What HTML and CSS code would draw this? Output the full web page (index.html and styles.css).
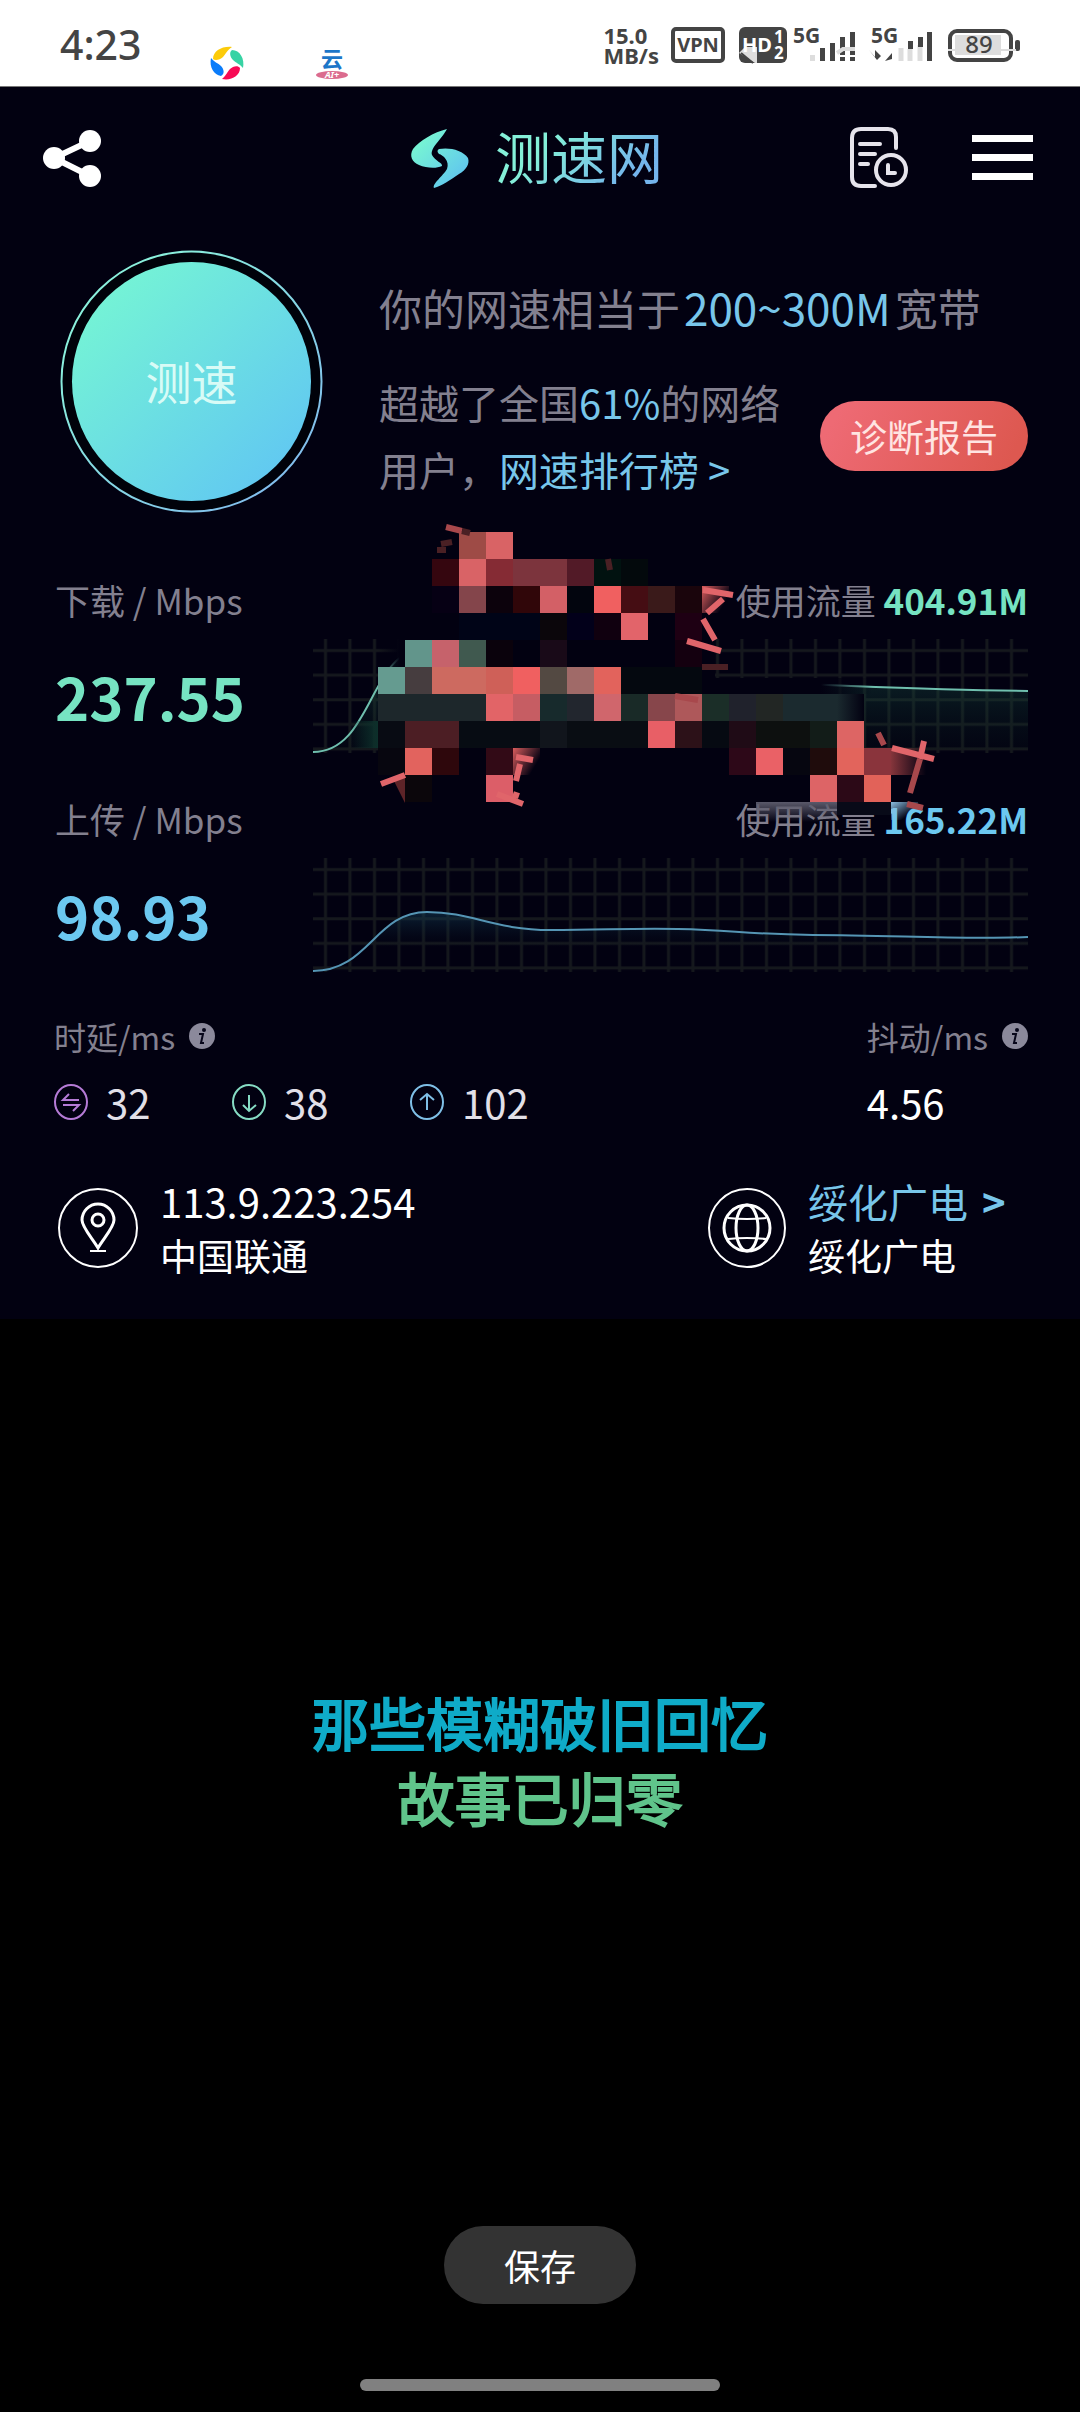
FILE: index.html
```html
<!DOCTYPE html>
<html lang="zh-CN">
<head>
    <meta charset="UTF-8">
    <meta name="viewport" content="width=device-width, initial-scale=1.0">
    <title>测速网</title>
    <link rel="stylesheet" href="styles.css">
</head>
<body>
    <div class="status-bar">
        <span class="time">4:23</span>
        <div class="status-apps">
            <svg width="34" height="34" viewBox="0 0 34 34">
                <path fill="#fccb0a" d="M3 13C3 5 12 0 22 1C17 4 16 8 13 11C10 14 5 15 3 13Z"/>
                <path fill="#37d3a4" d="M22 4C30 4 35 13 33 22C30 18 26 17 23 14C20 11 19 6 22 4Z"/>
                <path fill="#f70a54" d="M30 22C30 30 21 35 12 33C16 30 17 26 20 23C23 20 28 19 30 22Z"/>
                <path fill="#0a7cfa" d="M11 30C4 29 -1 21 1 12C4 16 8 17 11 20C14 23 15 28 11 30Z"/>
            </svg>
            <svg width="34" height="34" viewBox="0 0 34 34">
                <text class="cloud-text" x="17" y="21" text-anchor="middle">云</text>
                <ellipse cx="17" cy="29" rx="16" ry="4" fill="#db6b8e"/>
                <text class="ai-text" x="17" y="32" text-anchor="middle">AI+</text>
            </svg>
        </div>
        <div class="status-icons">
            <span class="net-speed">15.0<br>MB/s</span>
            <svg class="vpn" width="54" height="36" viewBox="0 0 54 36">
                <rect x="2" y="2" width="50" height="32" rx="3" fill="none" stroke="#444" stroke-width="4"/>
                <text class="badge-text" x="27" y="25" text-anchor="middle" fill="#444">VPN</text>
            </svg>
            <svg class="hd" width="48" height="36" viewBox="0 0 48 36">
                <rect width="48" height="36" rx="6" fill="#444"/>
                <path d="M0 26L6 20H18V36H16Z" fill="#ddd"/>
                <path d="M2 26L14 36" stroke="#444" stroke-width="2"/>
                <text class="badge-text" x="3" y="25" fill="#fff">HD</text>
                <text class="digit-text" x="35" y="16" fill="#fff">1</text>
                <text class="digit-text" x="35" y="32" fill="#fff">2</text>
            </svg>
            <svg class="signal" width="62" height="36" viewBox="0 0 62 36">
                <text class="net-text" x="0" y="16">5G</text>
                <g stroke="#444" stroke-width="5">
                    <path d="M29.500 21V34M39.500 16V34M49.500 10V34M59.500 5V34"/>
                </g>
                <path d="M19.500 28V34" stroke="#ddd" stroke-width="5"/>
                <path d="M44 26L50 22H62" stroke="#ddd" stroke-width="4" fill="none"/>
                <path d="M46 29H62" stroke="#fff" stroke-width="2"/>
            </svg>
            <svg class="signal-second" width="65" height="36" viewBox="0 0 65 36">
                <text class="net-text" x="3" y="16">5G</text>
                <path d="M1 23L7 30V23L13 29L9 33ZM17 34L24 26V32Z" fill="#444"/>
                <g stroke="#ddd" stroke-width="5">
                    <path d="M33 21V34M42 22V34M52 18V34"/>
                </g>
                <path d="M42.500 14V22M52.500 10V20M61.500 5V34" stroke="#444" stroke-width="5"/>
            </svg>
            <svg class="battery" width="72" height="36" viewBox="0 0 72 36">
                <rect x="2" y="4" width="61" height="29" rx="7" fill="none" stroke="#444" stroke-width="4"/>
                <rect x="7" y="8" width="46" height="20" fill="#ddd"/>
                <rect x="67" y="13" width="5" height="11" rx="2" fill="#444"/>
                <path d="M0 23H14M53 23H68" stroke="#ddd" stroke-width="2"/>
                <text class="battery-text" x="31" y="26" text-anchor="middle">89</text>
            </svg>
        </div>
    </div>

    <main class="panel">
        <header class="header">
            <button class="icon-button share" type="button" aria-label="分享">
                <svg width="62" height="62" viewBox="0 0 62 62" fill="#fff" stroke="#fff">
                    <path d="M49 14L13 31L49 49" fill="none" stroke-width="6"/>
                    <circle cx="49" cy="14" r="11" stroke="none"/>
                    <circle cx="13" cy="31" r="11" stroke="none"/>
                    <circle cx="49" cy="49" r="11" stroke="none"/>
                </svg>
            </button>
            <div class="brand">
                <svg width="58" height="60" viewBox="0 0 58 60">
                    <defs>
                        <linearGradient id="logoFill" x1="0" y1="0" x2="1" y2="1">
                            <stop offset="0.200" stop-color="#76f3d4"/>
                            <stop offset="0.900" stop-color="#5fc3f0"/>
                        </linearGradient>
                    </defs>
                    <path fill="url(#logoFill)" d="M36 1C23 4 8 13 2 21C-2 28 1 34 8 37C15 40 25 41 31 38C32 35 24 33 21 27C19 20 30 12 36 1ZM28 21C38 19 52 22 57 30C59 36 55 42 48 46C39 52 31 58 23 60C21 56 32 48 36 41C39 33 32 27 28 26C26 24 26 22 28 21Z"/>
                </svg>
                <h1 class="brand-name">测速网</h1>
            </div>
            <div class="header-actions">
                <button class="icon-button" type="button" aria-label="测速记录">
                    <svg width="58" height="62" viewBox="0 0 58 62" fill="none" stroke="#e6e4ec" stroke-width="4" stroke-linecap="round">
                        <path d="M46 21V10Q46 2 38 2H11Q2 2 2 11V50Q2 59 11 59H25"/>
                        <path d="M10 17H30M10 27H25M10 37H18"/>
                        <circle cx="41" cy="43" r="15"/>
                        <path d="M38 38V46H45"/>
                    </svg>
                </button>
                <button class="icon-button" type="button" aria-label="菜单">
                    <svg width="61" height="46" viewBox="0 0 61 46" fill="#fff">
                        <rect y="0" width="61" height="7"/>
                        <rect y="19" width="61" height="7"/>
                        <rect y="38" width="61" height="7"/>
                    </svg>
                </button>
            </div>
        </header>

        <section class="summary">
            <button class="test-button" type="button">
                <svg class="test-ring" viewBox="0 0 263 263">
                    <defs>
                        <linearGradient id="ringFill" x1="0" y1="0" x2="1" y2="1">
                            <stop offset="0.200" stop-color="#8af0dc"/>
                            <stop offset="0.850" stop-color="#82bfec"/>
                        </linearGradient>
                        <linearGradient id="testFill" x1="0" y1="0" x2="1" y2="1">
                            <stop offset="0.150" stop-color="#74f2d6"/>
                            <stop offset="0.850" stop-color="#62caf0"/>
                        </linearGradient>
                    </defs>
                    <circle cx="131.500" cy="131.500" r="130" fill="#00020a" stroke="url(#ringFill)" stroke-width="2"/>
                    <circle cx="131.500" cy="131.500" r="119.500" fill="url(#testFill)"/>
                </svg>
                <span class="test-label">测速</span>
            </button>
            <div class="summary-text">
                <p class="bandwidth">你的网速相当于<span class="highlight speed-range">200~300M</span>宽带</p>
                <div class="rank">
                    <p class="rank-text">超越了全国<span class="highlight">61%</span>的网络<br>用户，<a href="#rank">网速排行榜 &gt;</a></p>
                    <button class="report-button" type="button">诊断报告</button>
                </div>
            </div>
        </section>

        <section class="metric download">
            <h2 class="metric-label">下载 / Mbps</h2>
            <p class="usage">使用流量 <strong>404.91M</strong></p>
            <p class="metric-value">237.55</p>
            <svg class="chart" viewBox="0 0 715 114" preserveAspectRatio="none">
                <defs>
                    <pattern id="grid" x="0" y="-1" width="24.500" height="24.600" patternUnits="userSpaceOnUse">
                        <path d="M12.500 0V24.600M0 12.500H24.500" stroke="#15181d" stroke-width="3"/>
                    </pattern>
                    <linearGradient id="downFill" x1="0" y1="0" x2="0" y2="1">
                        <stop offset="0" stop-color="#1f6455" stop-opacity="0.500"/>
                        <stop offset="1" stop-color="#0c241f" stop-opacity="0.100"/>
                    </linearGradient>
                </defs>
                <rect width="715" height="114" fill="url(#grid)"/>
                <path fill="url(#downFill)" d="M0 113C60 113 56 10 112 10C200 10 280 42 370 42C500 44 580 50 715 52V110H0Z"/>
                <path class="line" d="M0 113C60 113 56 10 112 10C200 10 280 42 370 42C500 44 580 50 715 52"/>
            </svg>
        </section>

        <section class="metric upload">
            <h2 class="metric-label">上传 / Mbps</h2>
            <p class="usage">使用流量 <strong>165.22M</strong></p>
            <p class="metric-value">98.93</p>
            <svg class="chart" viewBox="0 0 715 114" preserveAspectRatio="none">
                <defs>
                    <linearGradient id="upFill" x1="0" y1="0" x2="0" y2="1">
                        <stop offset="0" stop-color="#15425a" stop-opacity="0.500"/>
                        <stop offset="0.600" stop-color="#0a1a28" stop-opacity="0"/>
                    </linearGradient>
                </defs>
                <rect width="715" height="114" fill="url(#grid)"/>
                <path fill="url(#upFill)" d="M0 113C56 113 62 54 114 54C160 54 180 72 238 72C290 72 320 70 365 71C420 72 430 76 500 77C580 77 650 82 715 79V113Z"/>
                <path class="line" d="M0 113C56 113 62 54 114 54C160 54 180 72 238 72C290 72 320 70 365 71C420 72 430 76 500 77C580 77 650 82 715 79"/>
            </svg>
        </section>

        <section class="latency">
            <div>
                <h2 class="latency-label">时延/ms
                    <svg width="26" height="26" viewBox="0 0 26 26">
                        <circle cx="13" cy="13" r="13" fill="#8b899b"/>
                        <path d="M10 11H14L12 20H15" fill="none" stroke="#07061a" stroke-width="2"/>
                        <circle cx="15" cy="7" r="2" fill="#07061a"/>
                    </svg>
                </h2>
                <ul class="latency-values">
                    <li>
                        <svg width="34" height="36" viewBox="0 0 34 36" fill="none" stroke="#b57bd6" stroke-width="2">
                            <ellipse cx="17" cy="18" rx="16" ry="17"/>
                            <path d="M25 16H9L15 10M9 21H25L19 27"/>
                        </svg>32
                    </li>
                    <li>
                        <svg width="34" height="36" viewBox="0 0 34 36" fill="none" stroke="#86dcc4" stroke-width="2">
                            <ellipse cx="17" cy="18" rx="16" ry="17"/>
                            <path d="M17 11V27M11 21L17 27L24 21"/>
                        </svg>38
                    </li>
                    <li>
                        <svg width="34" height="36" viewBox="0 0 34 36" fill="none" stroke="#7fbfe6" stroke-width="2">
                            <ellipse cx="17" cy="18" rx="16" ry="17"/>
                            <path d="M17 26V10M10 16L17 10L24 16"/>
                        </svg>102
                    </li>
                </ul>
            </div>
            <div class="jitter">
                <h2 class="latency-label">抖动/ms
                    <svg width="26" height="26" viewBox="0 0 26 26">
                        <circle cx="13" cy="13" r="13" fill="#8b899b"/>
                        <path d="M10 11H14L12 20H15" fill="none" stroke="#07061a" stroke-width="2"/>
                        <circle cx="15" cy="7" r="2" fill="#07061a"/>
                    </svg>
                </h2>
                <p class="jitter-value">4.56</p>
            </div>
        </section>

        <section class="network">
            <div class="network-item">
                <svg width="80" height="80" viewBox="0 0 80 80" fill="none" stroke="#fff" stroke-width="2">
                    <circle cx="40" cy="40" r="39"/>
                    <path d="M40 60C34 50 24 39 24 32A16 16 0 0 1 56 32C56 39 46 50 40 60Z" stroke-width="3"/>
                    <circle cx="40" cy="32" r="6" stroke-width="3"/>
                    <path d="M32 63H48"/>
                </svg>
                <div class="network-text">
                    <p class="network-name">113.9.223.254</p>
                    <p>中国联通</p>
                </div>
            </div>
            <div class="network-item server">
                <svg width="78" height="80" viewBox="0 0 78 80" fill="none" stroke="#fff" stroke-width="2">
                    <ellipse cx="39" cy="40" rx="38" ry="39"/>
                    <circle cx="39" cy="40" r="23" stroke-width="3"/>
                    <ellipse cx="39" cy="40" rx="11" ry="23" stroke-width="3"/>
                    <path d="M20 30Q39 32 58 30M20 51Q39 49 58 51"/>
                </svg>
                <div class="network-text">
                    <p class="network-name"><a class="server-link" href="#server">绥化广电<b>&gt;</b></a></p>
                    <p>绥化广电</p>
                </div>
            </div>
        </section>

        <!-- censor mosaic over the download chart, 27px cells -->
        <svg class="mosaic" width="567" height="300" viewBox="0 -12 567 300">
            <defs>
                <linearGradient id="fadeDown" x1="0" y1="0" x2="0" y2="1">
                    <stop offset="0" stop-color="#5a596a"/>
                    <stop offset="1" stop-color="#5a596a" stop-opacity="0"/>
                </linearGradient>
                <linearGradient id="fadeBlue" x1="0" y1="0" x2="1" y2="1">
                    <stop offset="0" stop-color="#8bbfe2"/>
                    <stop offset="0.700" stop-color="#8bbfe2" stop-opacity="0"/>
                </linearGradient>
                <linearGradient id="fadeRight" x1="0" y1="0" x2="1" y2="0">
                    <stop offset="0" stop-color="#1b2a2f"/>
                    <stop offset="1" stop-color="#1b2a2f" stop-opacity="0"/>
                </linearGradient>
                <linearGradient id="fadeRed" x1="0" y1="0" x2="1" y2="0.600">
                    <stop offset="0" stop-color="#d85c5c"/>
                    <stop offset="0.900" stop-color="#d85c5c" stop-opacity="0"/>
                </linearGradient>
                <linearGradient id="fadeBrown" x1="0" y1="0" x2="1" y2="0">
                    <stop offset="0" stop-color="#85353b"/>
                    <stop offset="1" stop-color="#85353b" stop-opacity="0"/>
                </linearGradient>
                <linearGradient id="fadeTeal" x1="1" y1="0" x2="0" y2="0">
                    <stop offset="0" stop-color="#0d302b"/>
                    <stop offset="1" stop-color="#0d302b" stop-opacity="0"/>
                </linearGradient>
                <linearGradient id="fadeCover" x1="0" y1="0" x2="1" y2="0">
                    <stop offset="0" stop-color="#020111"/>
                    <stop offset="0.700" stop-color="#020111"/>
                    <stop offset="1" stop-color="#020111" stop-opacity="0"/>
                </linearGradient>
                <linearGradient id="fadeCurve" x1="1" y1="0" x2="0" y2="0">
                    <stop offset="0.200" stop-color="#020111"/>
                    <stop offset="1" stop-color="#020111" stop-opacity="0"/>
                </linearGradient>
            </defs>
            <rect x="27" y="27" width="310" height="243" fill="#020111"/>
            <rect x="0" y="162" width="30" height="81" fill="#020111"/>
            <rect x="0" y="100" width="27" height="35" fill="url(#fadeCurve)"/>
            <rect x="324" y="146" width="170" height="16" fill="url(#fadeCover)"/>
            <rect x="324" y="162" width="162" height="81" fill="#020111"/>
            <rect x="-27" y="189" width="27" height="27" fill="url(#fadeTeal)"/>

            <rect x="81" y="0" width="27" height="27" fill="#9e4b46"/>
            <rect x="108" y="0" width="27" height="27" fill="#d96365"/>

            <rect x="54" y="27" width="27" height="27" fill="#35060f"/>
            <rect x="81" y="27" width="27" height="27" fill="#d96366"/>
            <rect x="108" y="27" width="27" height="27" fill="#852b34"/>
            <rect x="135" y="27" width="54" height="27" fill="#7c343d"/>
            <rect x="189" y="27" width="27" height="27" fill="#521a27"/>
            <rect x="216" y="27" width="27" height="27" fill="#011210"/>
            <rect x="243" y="27" width="27" height="27" fill="#03090c"/>

            <rect x="54" y="54" width="27" height="27" fill="#060014"/>
            <rect x="81" y="54" width="27" height="27" fill="#84454b"/>
            <rect x="108" y="54" width="27" height="27" fill="#0c020c"/>
            <rect x="135" y="54" width="27" height="27" fill="#300609"/>
            <rect x="162" y="54" width="27" height="27" fill="#d36066"/>
            <rect x="189" y="54" width="27" height="27" fill="#02050e"/>
            <rect x="216" y="54" width="27" height="27" fill="#f06060"/>
            <rect x="243" y="54" width="27" height="27" fill="#450d13"/>
            <rect x="270" y="54" width="27" height="27" fill="#3a1a1a"/>
            <rect x="297" y="54" width="27" height="27" fill="#1a050c"/>
            <rect x="324" y="54" width="27" height="27" fill="url(#fadeRed)"/>

            <rect x="81" y="81" width="81" height="27" fill="#000417"/>
            <rect x="162" y="81" width="27" height="27" fill="#0b060b"/>
            <rect x="189" y="81" width="27" height="27" fill="#02001a"/>
            <rect x="216" y="81" width="27" height="27" fill="#10000f"/>
            <rect x="243" y="81" width="27" height="27" fill="#e2646a"/>
            <rect x="297" y="81" width="27" height="27" fill="#1e0013"/>

            <rect x="27" y="108" width="27" height="27" fill="#62958b"/>
            <rect x="54" y="108" width="27" height="27" fill="#c6626b"/>
            <rect x="81" y="108" width="27" height="27" fill="#40594f"/>
            <rect x="108" y="108" width="27" height="27" fill="#0a020c"/>
            <rect x="162" y="108" width="27" height="27" fill="#190a18"/>
            <rect x="297" y="108" width="27" height="27" fill="#14000f"/>

            <rect x="0" y="135" width="27" height="27" fill="#659b90"/>
            <rect x="27" y="135" width="27" height="27" fill="#463d3f"/>
            <rect x="54" y="135" width="54" height="27" fill="#cd6a60"/>
            <rect x="108" y="135" width="27" height="27" fill="#cf6058"/>
            <rect x="135" y="135" width="27" height="27" fill="#f06060"/>
            <rect x="162" y="135" width="27" height="27" fill="#534942"/>
            <rect x="189" y="135" width="27" height="27" fill="#a06a68"/>
            <rect x="216" y="135" width="27" height="27" fill="#e2635c"/>
            <rect x="243" y="135" width="81" height="27" fill="#04080f"/>

            <rect x="0" y="162" width="108" height="27" fill="#1d272b"/>
            <rect x="108" y="162" width="27" height="27" fill="#e26467"/>
            <rect x="135" y="162" width="27" height="27" fill="#c65d63"/>
            <rect x="162" y="162" width="27" height="27" fill="#172a2c"/>
            <rect x="189" y="162" width="27" height="27" fill="#22262e"/>
            <rect x="216" y="162" width="27" height="27" fill="#d0666c"/>
            <rect x="243" y="162" width="27" height="27" fill="#192a27"/>
            <rect x="270" y="162" width="27" height="27" fill="#87464b"/>
            <rect x="297" y="162" width="27" height="27" fill="#ae585a"/>
            <rect x="324" y="162" width="27" height="27" fill="#1b2e28"/>
            <rect x="351" y="162" width="27" height="27" fill="#20222c"/>
            <rect x="378" y="162" width="27" height="27" fill="#222624"/>
            <rect x="405" y="162" width="54" height="27" fill="#1b2a2f"/>
            <rect x="459" y="162" width="27" height="27" fill="url(#fadeRight)"/>

            <rect x="0" y="189" width="27" height="27" fill="#080b13"/>
            <rect x="27" y="189" width="54" height="27" fill="#4c1e24"/>
            <rect x="81" y="189" width="81" height="27" fill="#070c13"/>
            <rect x="162" y="189" width="27" height="27" fill="#11151c"/>
            <rect x="189" y="189" width="81" height="27" fill="#090d13"/>
            <rect x="270" y="189" width="27" height="27" fill="#e85f66"/>
            <rect x="297" y="189" width="27" height="27" fill="#2c1118"/>
            <rect x="324" y="189" width="27" height="27" fill="#060a12"/>
            <rect x="351" y="189" width="27" height="27" fill="#1f0b16"/>
            <rect x="378" y="189" width="54" height="27" fill="#0d100f"/>
            <rect x="432" y="189" width="27" height="27" fill="#121c18"/>
            <rect x="459" y="189" width="27" height="27" fill="#dd6564"/>

            <rect x="0" y="216" width="27" height="27" fill="#07060f"/>
            <rect x="27" y="216" width="27" height="27" fill="#e2635e"/>
            <rect x="54" y="216" width="27" height="27" fill="#2e070c"/>
            <rect x="108" y="216" width="27" height="27" fill="#320a16"/>
            <rect x="135" y="216" width="27" height="27" fill="url(#fadeRed)"/>
            <rect x="351" y="216" width="27" height="27" fill="#2d0818"/>
            <rect x="378" y="216" width="27" height="27" fill="#ea6166"/>
            <rect x="405" y="216" width="27" height="27" fill="#060610"/>
            <rect x="432" y="216" width="27" height="27" fill="#1f0c0c"/>
            <rect x="459" y="216" width="27" height="27" fill="#e2645c"/>
            <rect x="486" y="216" width="27" height="27" fill="#8a343c"/>
            <rect x="513" y="216" width="35" height="27" fill="url(#fadeBrown)"/>

            <path d="M27 243V271L14 245Z" fill="#5e2428"/>
            <rect x="27" y="243" width="27" height="27" fill="#0b060b"/>
            <rect x="108" y="243" width="27" height="27" fill="#dc5e68"/>
            <rect x="432" y="243" width="27" height="27" fill="#dd6466"/>
            <rect x="459" y="243" width="27" height="27" fill="#2c0917"/>
            <rect x="486" y="243" width="27" height="27" fill="#e26259"/>

            <rect x="378" y="270" width="81" height="20" fill="url(#fadeDown)"/>
            <rect x="459" y="270" width="54" height="13" fill="#080a18"/>
            <rect x="513" y="270" width="27" height="18" fill="url(#fadeBlue)"/>

            <g fill="none" stroke="#e0656a" stroke-width="6">
                <path d="M3 252L27 243M138 225L155 228M119 262L145 272M135 262L141 264M142 232L138 249"/>
                <path d="M325 58L355 63M345 67L329 81M325 87L337 108M309 109L343 119"/>
                <path d="M514 216L556 227M546 209L542 227"/>
            </g>
            <g fill="none" stroke="#a8484c" stroke-width="6">
                <path d="M68 -5L84 -1M542 227L532 261M500 201L506 213M529 272L545 276M297 164L320 168"/>
            </g>
            <g fill="none" stroke="#4a2024" stroke-width="6">
                <path d="M84 -1L92 1M63 12L74 10M59 18L68 18M230 27L232 38M324 135H350"/>
            </g>
        </svg>
    </main>

    <div class="lyrics">
        <p>那些模糊破旧回忆</p>
        <p class="lyrics-next">故事已归零</p>
    </div>

    <footer class="footer">
        <button class="save-button" type="button">保存</button>
        <div class="home-bar"></div>
    </footer>
</body>
</html>
```
FILE: styles.css
```css
* {
    box-sizing: border-box;
}
body {
    display: flex;
    flex-direction: column;
    min-height: 100vh;
    margin: 0;
    background-color: #000;
    color: #fff;
    font-family: "Noto Sans CJK SC", sans-serif;
}
h1, h2, p, ul {
    margin: 0;
    padding: 0;
    font-weight: normal;
}
svg {
    display: block;
    flex: none;
    overflow: visible;
}
a {
    color: #78c6ea;
    text-decoration: none;
}
button {
    border: none;
    padding: 0;
    background: none;
    color: inherit;
    font-family: inherit;
    cursor: pointer;
}

/* status bar */
.status-bar {
    display: flex;
    align-items: center;
    height: 87px;
    padding: 4px 60px 0;
    background-color: #fff;
    border-bottom: 1px solid #777;
    color: #444;
    font-family: "Noto Sans", sans-serif;
}
.time {
    width: 150px;
    padding-bottom: 2px;
    font-size: 41px;
    font-weight: 500;
}
.status-apps {
    display: flex;
    gap: 71px;
    padding-top: 36px;
}
.status-icons {
    display: flex;
    align-items: center;
    margin-left: auto;
}
.net-speed {
    font-size: 22px;
    font-weight: 700;
    line-height: 20px;
}
.vpn {
    margin-left: 12px;
}
.hd {
    margin-left: 14px;
}
.signal {
    margin-left: 6px;
}
.signal-second {
    margin-left: 13px;
}
.battery {
    margin-left: 15px;
}
.badge-text {
    font-size: 20px;
    font-weight: 700;
}
.digit-text {
    font-size: 17px;
    font-weight: 700;
}
.net-text {
    fill: #444;
    font-size: 21px;
    font-weight: 700;
}
.battery-text {
    fill: #444;
    font-size: 24px;
    font-weight: 500;
}
.cloud-text {
    fill: #1d76c8;
    font-family: "Noto Sans CJK SC", sans-serif;
    font-size: 22px;
    font-weight: 700;
}
.ai-text {
    fill: #fff;
    font-size: 9px;
    font-style: italic;
    font-weight: 700;
}

/* speed test panel */
.panel {
    position: relative;
    padding-bottom: 37px;
    background-color: #020111;
}
.header {
    display: grid;
    grid-template-columns: 1fr auto 1fr;
    align-items: center;
    height: 142px;
    padding: 0 47px 0 41px;
}
.brand {
    display: flex;
    align-items: center;
    gap: 26px;
}
.brand-name {
    padding-bottom: 6px;
    background: linear-gradient(135deg, #84f0d8 30%, #74b4ec 80%);
    background-clip: text;
    -webkit-background-clip: text;
    color: transparent;
    font-size: 56px;
    line-height: 64px;
}
.header-actions {
    display: flex;
    align-items: center;
    justify-content: flex-end;
    gap: 64px;
}
.summary {
    display: flex;
    gap: 56px;
    padding: 21px 52px 0 60px;
}
.test-button {
    display: grid;
    flex: none;
    width: 263px;
    height: 263px;
    place-items: center;
}
.test-ring,
.test-label {
    grid-area: 1 / 1;
}
.test-ring {
    width: 263px;
}
.test-label {
    padding-bottom: 4px;
    color: #d8fbf6;
    font-size: 46px;
}
.summary-text {
    flex: 1;
    padding-top: 24px;
    color: #83808f;
}
.highlight {
    color: #78c6ea;
}
.bandwidth {
    font-size: 43px;
    line-height: 66px;
}
.speed-range {
    padding: 0 4px;
    font-size: 44px;
}
.rank {
    display: flex;
    align-items: center;
    justify-content: space-between;
    padding-top: 29px;
}
.rank-text {
    font-size: 40px;
    line-height: 67px;
}
.report-button {
    width: 208px;
    height: 70px;
    border-radius: 35px;
    background: linear-gradient(120deg, #ee6a74 10%, #dd5850 90%);
    color: #ffe4e2;
    font-size: 37px;
    line-height: 66px;
}
.metric {
    display: grid;
    grid-template-columns: 258px 1fr;
    grid-template-rows: 48px 114px;
    row-gap: 15px;
    align-items: center;
    padding: 0 52px 0 55px;
}
.download {
    margin-top: 63px;
}
.upload {
    margin-top: 42px;
}
.metric-label,
.usage {
    color: #83808f;
    font-size: 35px;
    line-height: 48px;
}
.usage {
    text-align: right;
}
.metric-value {
    font-size: 58px;
    font-weight: 700;
    line-height: 114px;
}
.download strong,
.download .metric-value {
    color: #76e3c2;
}
.upload strong,
.upload .metric-value {
    color: #6cc8f0;
}
.chart {
    width: 100%;
    height: 114px;
}
.line {
    fill: none;
    stroke-width: 2;
}
.download .line {
    stroke: #6fbfae;
}
.upload .line {
    stroke: #5595b4;
}
.latency {
    display: flex;
    justify-content: space-between;
    padding: 42px 52px 0 54px;
}
.latency-label {
    display: flex;
    align-items: center;
    gap: 14px;
    color: #83808f;
    font-size: 32px;
    line-height: 44px;
}
.latency-values {
    display: flex;
    margin-top: 20px;
    list-style: none;
}
.latency-values li {
    display: flex;
    align-items: center;
    gap: 18px;
    width: 178px;
    color: #e2e0e8;
    font-size: 40px;
    line-height: 48px;
}
.jitter-value {
    margin-top: 20px;
    font-size: 40px;
    line-height: 48px;
}
.network {
    display: flex;
    justify-content: space-between;
    padding: 48px 52px 0 58px;
}
.network-item {
    display: flex;
    align-items: center;
    gap: 22px;
}
.server {
    width: 320px;
}
.network-text {
    font-size: 37px;
    line-height: 54px;
}
.network-name {
    font-size: 40px;
}
.server-link {
    display: flex;
    gap: 14px;
}
.mosaic {
    position: absolute;
    top: 433px;
    left: 378px;
}

/* lyrics and save */
.lyrics {
    margin-top: 365px;
    color: #0fabc8;
    font-size: 57px;
    line-height: 75px;
    text-align: center;
    -webkit-text-stroke: 2px currentColor;
}
.lyrics-next {
    color: #60c48b;
}
.footer {
    display: flex;
    flex-direction: column;
    align-items: center;
    gap: 75px;
    margin-top: auto;
    padding-bottom: 21px;
}
.save-button {
    width: 192px;
    height: 78px;
    border-radius: 39px;
    background-color: #333;
    font-size: 36px;
}
.home-bar {
    width: 360px;
    height: 12px;
    border-radius: 6px;
    background-color: #808080;
}
```
